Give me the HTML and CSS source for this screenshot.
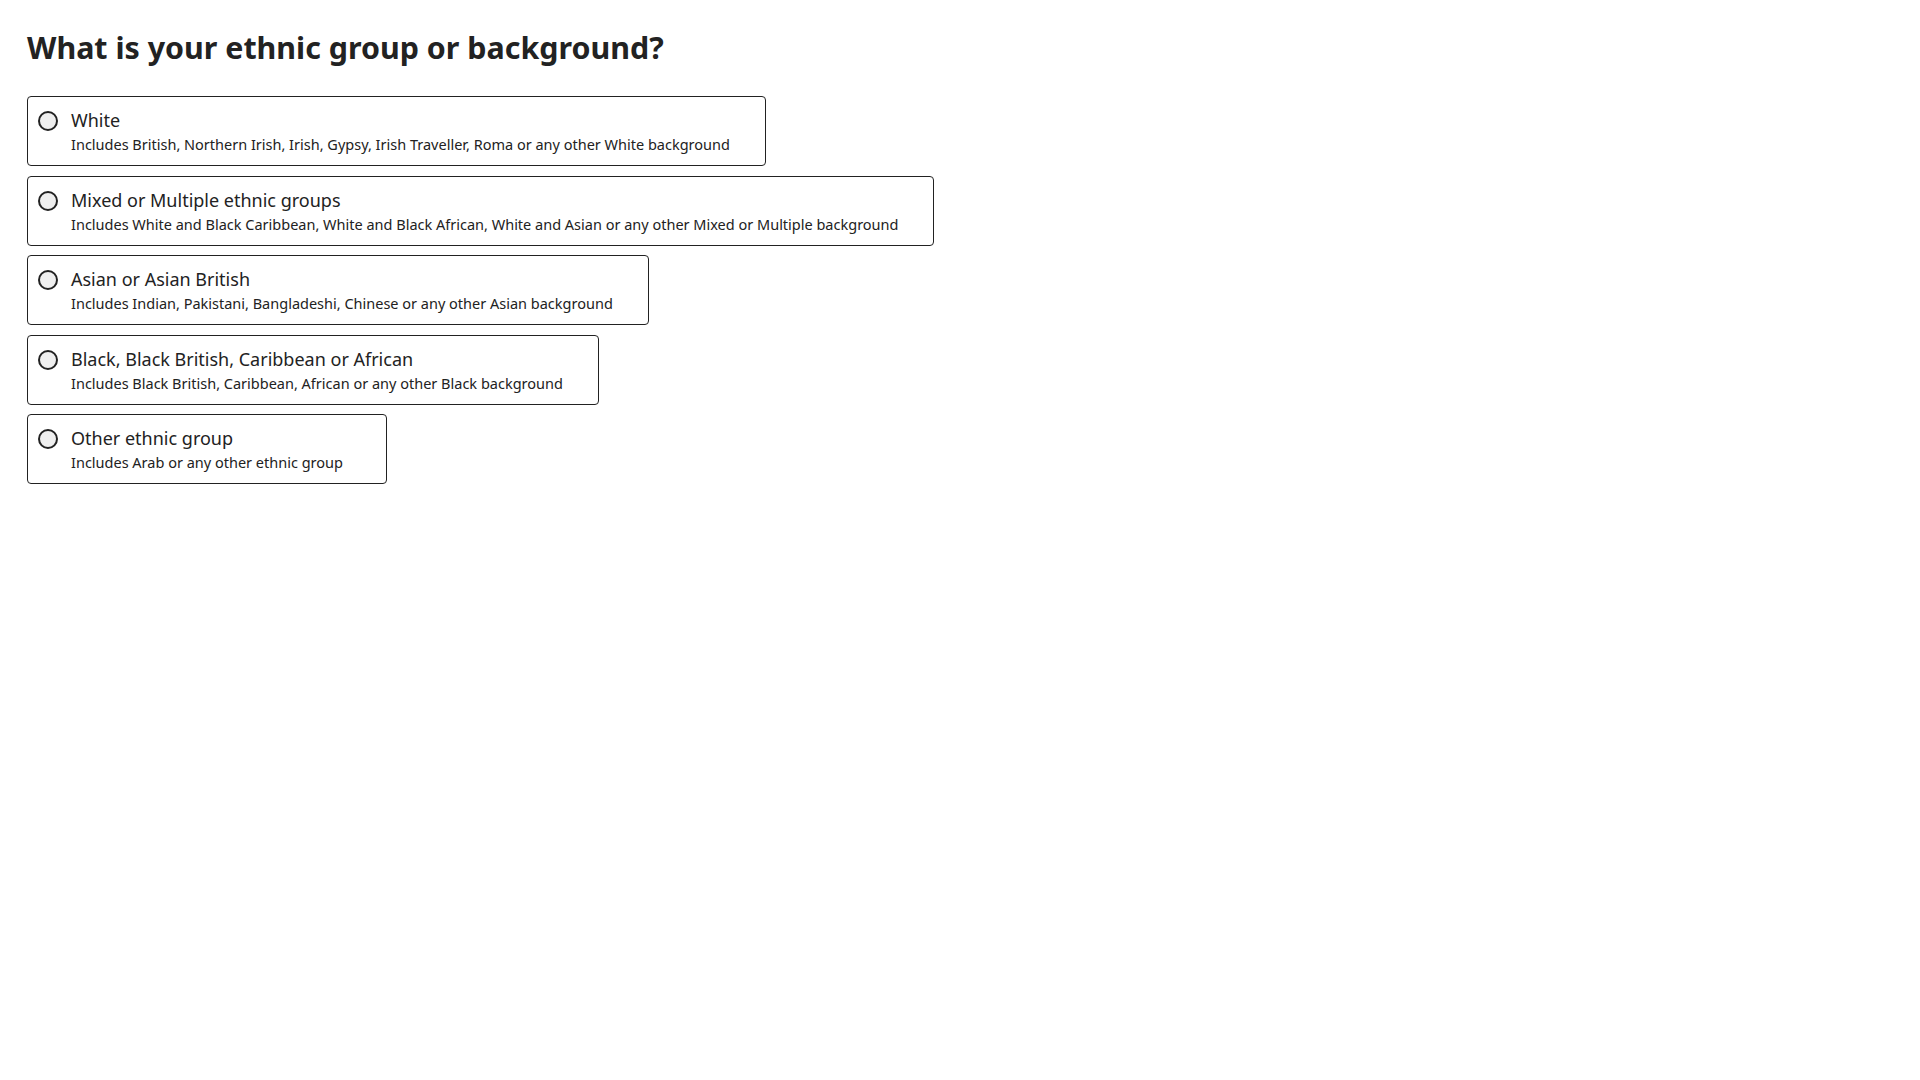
FILE: index.html
```html
<!DOCTYPE html>
<html lang="en">
<head>
<meta charset="utf-8">
<title>Ethnic group</title>
<link rel="stylesheet" href="styles.css">
</head>
<body>
<main class="page">
  <h1 class="question">What is your ethnic group or background?</h1>
  <div class="options">
    <label class="option">
      <span class="radio"></span>
      <span class="text">
        <span class="label">White</span>
        <span class="desc">Includes British, Northern Irish, Irish, Gypsy, Irish Traveller, Roma or any other White background</span>
      </span>
    </label>
    <label class="option">
      <span class="radio"></span>
      <span class="text">
        <span class="label">Mixed or Multiple ethnic groups</span>
        <span class="desc">Includes White and Black Caribbean, White and Black African, White and Asian or any other Mixed or Multiple background</span>
      </span>
    </label>
    <label class="option">
      <span class="radio"></span>
      <span class="text">
        <span class="label">Asian or Asian British</span>
        <span class="desc">Includes Indian, Pakistani, Bangladeshi, Chinese or any other Asian background</span>
      </span>
    </label>
    <label class="option">
      <span class="radio"></span>
      <span class="text">
        <span class="label">Black, Black British, Caribbean or African</span>
        <span class="desc">Includes Black British, Caribbean, African or any other Black background</span>
      </span>
    </label>
    <label class="option">
      <span class="radio"></span>
      <span class="text">
        <span class="label">Other ethnic group</span>
        <span class="desc">Includes Arab or any other ethnic group</span>
      </span>
    </label>
  </div>
</main>
</body>
</html>
```

FILE: styles.css
```css
html, body {
  margin: 0;
  padding: 0;
  background: #ffffff;
}

body {
  font-family: "Noto Sans", "Open Sans", sans-serif;
  color: #222222;
}

.page {
  padding: 28px 27px;
}

.question {
  margin: 0 0 28px 0;
  font-size: 30.4px;
  line-height: 40px;
  font-weight: 700;
  color: #222222;
}

.options {
  display: flex;
  flex-direction: column;
  align-items: flex-start;
  gap: 9.6px;
}

.option {
  display: flex;
  align-items: flex-start;
  gap: 13px;
  box-sizing: border-box;
  min-width: 360px;
  border: 1px solid #222222;
  border-radius: 4px;
  padding: 10px 35px 10px 10px;
  cursor: pointer;
}

.radio {
  flex: none;
  width: 20px;
  height: 20px;
  box-sizing: border-box;
  border: 2px solid #222222;
  border-radius: 50%;
  background: #efefef;
  margin-top: 4px;
}

.text {
  display: flex;
  flex-direction: column;
}

.label {
  font-size: 18px;
  line-height: 27px;
}

.desc {
  font-size: 14.5px;
  line-height: 21px;
}
```
